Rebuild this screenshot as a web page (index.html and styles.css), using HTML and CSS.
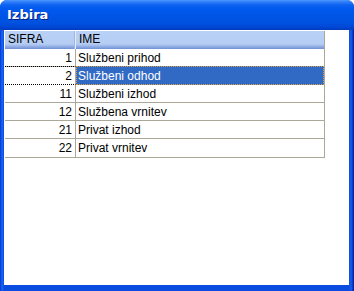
FILE: index.html
```html
<!DOCTYPE html>
<html>
<head>
<meta charset="utf-8">
<link rel="stylesheet" href="styles.css">
</head>
<body>
<div class="window">
  <div class="titlebar"><span class="title">Izbira</span></div>
  <div class="client">
    <div class="grid">
      <div class="row head">
        <div class="cell c1">SIFRA</div>
        <div class="cell c2">IME</div>
      </div>
      <div class="row">
        <div class="cell c1 num">1</div>
        <div class="cell c2">Službeni prihod</div>
      </div>
      <div class="row sel">
        <div class="cell c1 num">2</div>
        <div class="cell c2">Službeni odhod</div>
      </div>
      <div class="row">
        <div class="cell c1 num">11</div>
        <div class="cell c2">Službeni izhod</div>
      </div>
      <div class="row">
        <div class="cell c1 num">12</div>
        <div class="cell c2">Službena vrnitev</div>
      </div>
      <div class="row">
        <div class="cell c1 num">21</div>
        <div class="cell c2">Privat izhod</div>
      </div>
      <div class="row">
        <div class="cell c1 num">22</div>
        <div class="cell c2">Privat vrnitev</div>
      </div>
    </div>
  </div>
</div>
</body>
</html>
```
FILE: styles.css
```css
html, body { margin: 0; padding: 0; background: #fff; }
.window {
  width: 354px;
  height: 291px;
  box-sizing: border-box;
  display: flex;
  flex-direction: column;
  background: linear-gradient(to right, #0831d9 0, #166aee 2px, #0a4be0 4px, #0a4be0 calc(100% - 5px), #1a5ee8 calc(100% - 3px), #0019a8 100%);
  border-radius: 7px 7px 0 0;
  font-family: "Liberation Sans", Arial, sans-serif;
  font-size: 12px;
}
.titlebar {
  height: 30px;
  flex: none;
  border-radius: 7px 7px 0 0;
  background: linear-gradient(to bottom, #4a98ff 0, #2f7cf8 2px, #0c62f0 5px, #0058ee 9px, #0055e6 16px, #0052e0 22px, #004ad8 26px, #0040c8 29px, #0038b8 30px);
  display: flex;
  align-items: center;
  padding-left: 7px;
  padding-bottom: 2px;
  box-sizing: border-box;
}
.title {
  color: #fff;
  font-family: "DejaVu Sans", Verdana, sans-serif;
  font-weight: bold;
  font-size: 13px;
  text-shadow: 1px 1px 0 #0a1e80;
}
.client {
  flex: 1;
  margin: 0 5px 6px 4px;
  background: #fff;
  padding: 1px 0 0 1px;
}
.grid {
  width: 319px;
  display: flex;
  flex-direction: column;
  border-right: 1px solid #aca899;
  border-bottom: 1px solid #aca899;
}
.row {
  display: flex;
  height: 18px;
  border-bottom: 1px solid #aca899;
  box-sizing: border-box;
}
.row:last-child { border-bottom: none; }
.cell {
  display: flex;
  align-items: center;
  box-sizing: border-box;
  padding: 0 2px;
  color: #000;
  white-space: nowrap;
}
.c1 { width: 71px; border-right: 1px solid #aca899; }
.c2 { flex: 1; }
.num { justify-content: flex-end; padding-right: 3px; }
.head {
  height: 18px;
  background: linear-gradient(to bottom, #b9d1f6 0, #b5cdf3 13px, #9ab5e8 15px, #7e9cdc 17px, #6f8fd6 18px);
  border-bottom: none;
}
.head .cell { padding-bottom: 2px; padding-left: 3px; }
.head .c1 { border-right: 1px solid #e4ecfb; box-shadow: inset -1px 0 0 #9db6e6; }
.sel .c1 {
  border-top: 1px dotted #000;
  border-bottom: 1px dotted #000;
  margin-top: -1px;
}
.sel { border-bottom: none; }
.sel .c2 {
  background: #316ac5;
  color: #fff;
  border: 1px dotted #e0a040;
  margin-top: -1px;
  padding-left: 1px;
}
```
